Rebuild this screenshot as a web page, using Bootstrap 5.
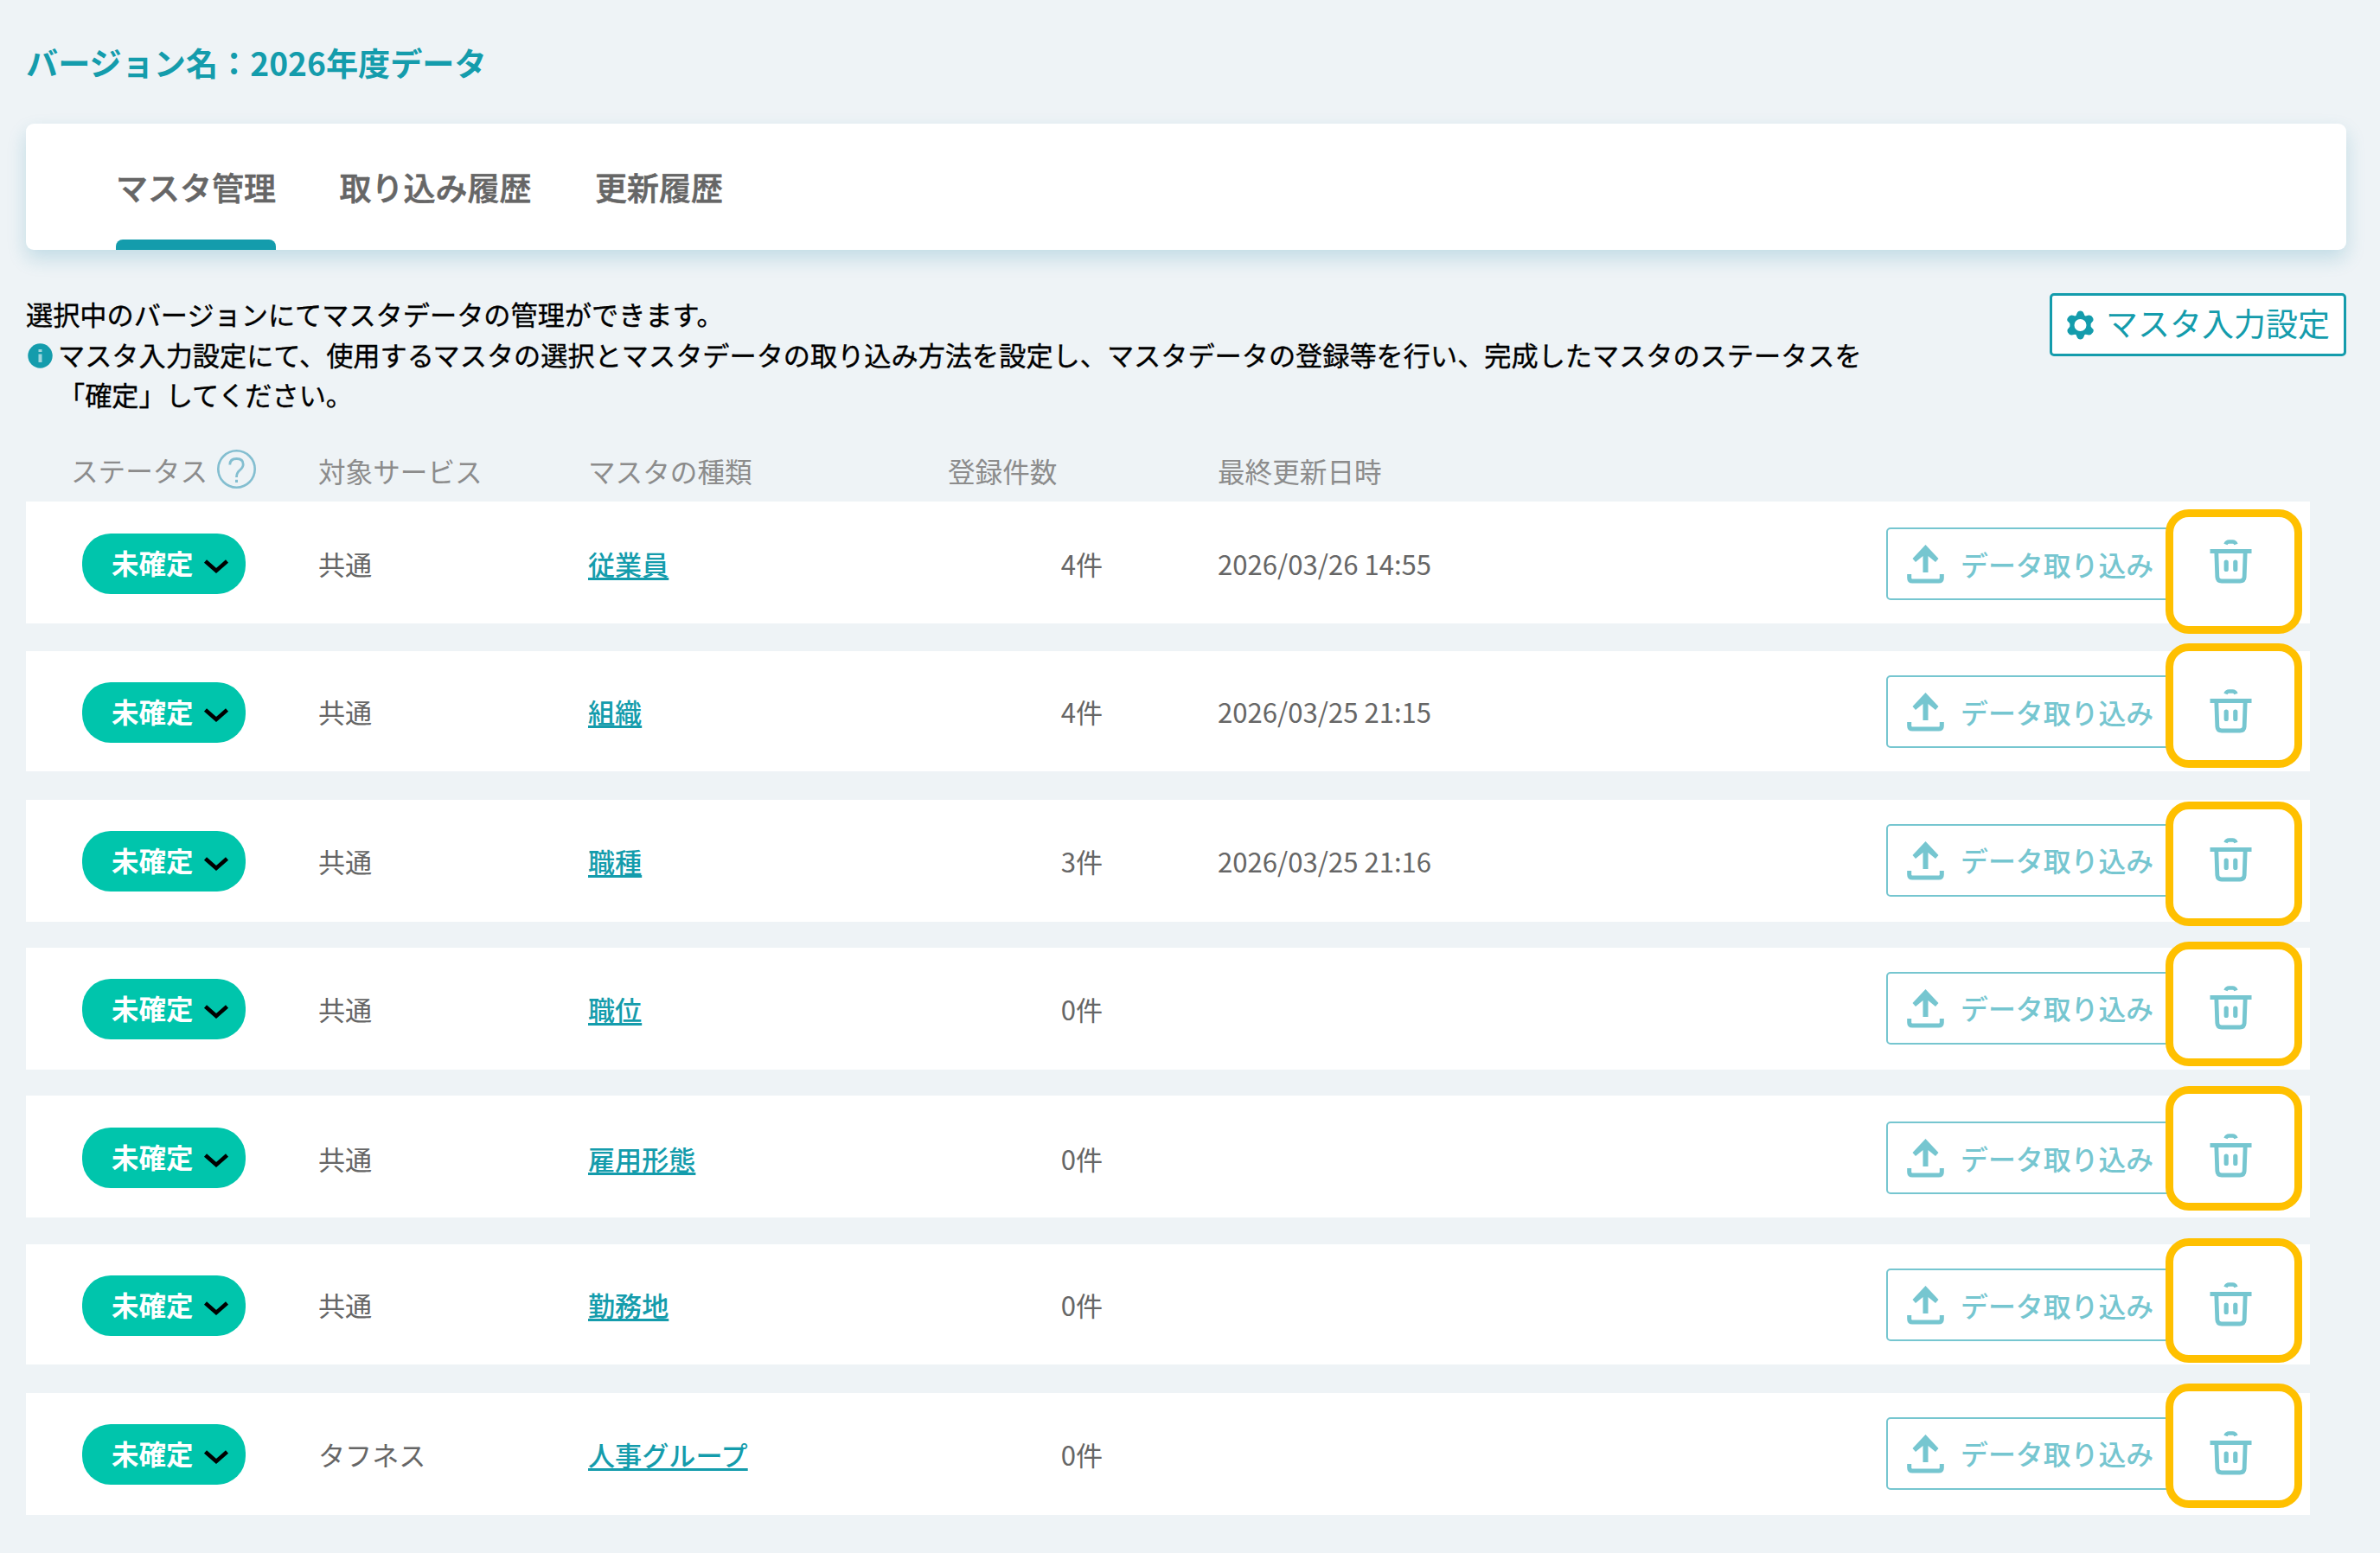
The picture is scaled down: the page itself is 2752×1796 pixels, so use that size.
<!DOCTYPE html>
<html lang="ja">
<head>
<meta charset="utf-8">
<meta name="viewport" content="width=device-width, initial-scale=1">
<title>マスタ管理</title>
<link href="https://cdn.jsdelivr.net/npm/bootstrap@5.3.0/dist/css/bootstrap.min.css" rel="stylesheet">
<style>
  :root { --teal: #149cac; --teal-soft: #76c6d0; --mint: #00c5ac; --amber: #ffc000; }
  body { background: #eef3f6; font-family: "Noto Sans CJK JP", sans-serif; font-size: 31.1px; line-height: 46.5px; color: #000; }
  svg { display: block; flex: none; }
  .page { padding: 0 39px 0 30px; }
  .page-title { height: 143px; padding-top: 49px; font-size: 37.15px; line-height: 46px; font-weight: 700; color: var(--teal); }
  .tab-card { height: 146px; border-radius: 9px; padding-left: 104px; gap: 73.5px; box-shadow: 0 10px 22px rgba(20, 130, 165, .2); }
  .tab-card .nav-link { padding: 50px 0 0; font-size: 37px; line-height: 46px; font-weight: 500; -webkit-text-stroke: .6px #666; color: #666; position: relative; border: 0; }
  .tab-card .nav-link.active::after { content: ""; position: absolute; left: 0; right: 0; bottom: 0; height: 12px; background: var(--teal); border-radius: 8px 8px 0 0; }
  .intro { margin-top: 50px; height: 141px; font-size: 31.18px; }
  .intro-text { padding-top: 1px; -webkit-text-stroke: .35px #000; }
  .note-line svg { margin: 10px 6px 0 2px; }
  .btn-setting { width: 343px; height: 73px; border: 3px solid var(--teal); border-radius: 5px; background: #fff; color: var(--teal); font-size: 37px; line-height: 46px; padding: 0 0 0 16px; gap: 13px; }
  .btn-setting span { margin-top: -5px; }
  .list-head { height: 100px; width: 2641px; padding-bottom: 13px; color: #8c8c8c; font-size: 31.6px; }
  .master-row { width: 2641px; height: 141px; color: #666; margin-bottom: 30.8px; background: #fff; position: relative; }
  .master-row:nth-child(1) { margin-bottom: 32px; }
  .master-row:nth-child(2) { height: 139px; margin-bottom: 32.5px; }
  .master-row:nth-child(3) { margin-bottom: 30px; }
  .master-row:nth-child(6) { height: 139px; margin-bottom: 32.6px; }
  .c-status { width: 338px; flex: none; }
  .c-service { width: 312px; flex: none; }
  .c-type { width: 416px; flex: none; }
  .c-count { width: 179px; flex: none; }
  .c-date { width: 773px; margin-left: 133px; flex: none; }
  .list-head .c-status { padding-left: 52px; }
  .list-head .c-status svg { margin: 0 0 2px 11px; }
  .master-row .c-status { padding-left: 65px; }
  .cell-text { padding-top: var(--drop, 2px); }
  .master-row:nth-child(1), .master-row:nth-child(5) { --drop: 4px; --btn-top: 30px; }
  .pill { width: 189px; height: 70px; margin-top: 2px; border-radius: 33px; background: var(--mint); color: #fff; font-weight: 700; font-size: 31.5px; padding: 0 19px 3px 34px; border: 0; }
  .pill svg { margin-top: 9px; }
  .type-link { color: var(--teal); font-weight: 500; text-decoration: underline; text-decoration-thickness: 3px; text-underline-offset: 2.5px; text-decoration-skip-ink: none; }
  .btn-import { width: 340px; height: 84px; margin-top: var(--btn-top, 28px); border: 2.5px solid var(--teal-soft); border-radius: 5px; color: var(--teal-soft); background: #fff; font-size: 31.9px; font-weight: 500; padding: 0 0 0 22px; gap: 19px; flex: none; }
  .btn-import span { padding-top: 1px; }
  .btn-trash { width: 51px; height: 52px; margin: 43px 0 0 34px; padding: 0; border: 0; color: var(--teal-soft); position: relative; z-index: 2; }
  /* highlight frame lying over the delete button */
  .spot { position: absolute; z-index: 1; left: 2474px; top: var(--spot); width: 158px; height: 144px; border: 9px solid var(--amber); border-radius: 27px; background: #fff; }
  .master-row:nth-child(1) { --spot: 9px; }
  .master-row:nth-child(2) { --spot: -9px; }
  .master-row:nth-child(3) { --spot: 2px; }
  .master-row:nth-child(4) { --spot: -7px; }
  .master-row:nth-child(5) { --spot: -11px; }
  .master-row:nth-child(6) { --spot: -7px; }
  .master-row:nth-child(7) { --spot: -11px; }
</style>
</head>
<body>
<svg class="d-none" xmlns="http://www.w3.org/2000/svg">
  <symbol id="i-down" viewBox="0 0 30 18"><path d="M2.5 3 L15 14 L27.500 3" fill="none" stroke="#000" stroke-width="4.600"/></symbol>
  <symbol id="i-upload" viewBox="0 0 43 46"><path d="M21.500 1 L36.500 17 L33 21 L24.500 14 V33 H18.500 V14 L10 21 L6.500 17 Z" fill="currentColor"/><path d="M2.700 35 V39.500 Q2.700 43 6.200 43 H36.800 Q40.300 43 40.300 39.500 V35" fill="none" stroke="currentColor" stroke-width="5"/></symbol>
  <symbol id="i-trash" viewBox="0 0 49 52"><g fill="none" stroke="currentColor"><path d="M18.500 6.500 Q19.500 3.500 22.500 3.500 H26.500 Q29.500 3.500 30.500 6.500" stroke-width="4.500"/><path d="M0.500 14.500 H48.500" stroke-width="5"/><path d="M7.800 15 L8.800 44 Q9.100 49 14 49 H35 Q39.900 49 40.200 44 L41.200 15" stroke-width="4.800"/><path d="M19.200 27 V35.500 M29.800 27 V35.500" stroke-width="5.200" stroke-linecap="round"/></g></symbol>
</svg>

<div class="page">
  <h1 class="page-title mb-0">バージョン名：2026年度データ</h1>

  <nav class="tab-card nav bg-white d-flex align-items-stretch">
    <a class="nav-link active">マスタ管理</a>
    <a class="nav-link">取り込み履歴</a>
    <a class="nav-link">更新履歴</a>
  </nav>

  <div class="intro d-flex justify-content-between align-items-start">
    <div class="intro-text">
      <div>選択中のバージョンにてマスタデータの管理ができます。</div>
      <div class="note-line d-flex align-items-start">
        <svg width="29" height="29" viewBox="0 0 29 29"><circle cx="14.500" cy="14.500" r="14.200" fill="#149cac"/><path d="M14.500 7 V10 M14.500 12.500 V22" stroke="#9fd6dd" stroke-width="4"/></svg>
        <div>マスタ入力設定にて、使用するマスタの選択とマスタデータの取り込み方法を設定し、マスタデータの登録等を行い、完成したマスタのステータスを<br>「確定」してください。</div>
      </div>
    </div>
    <button class="btn btn-setting d-flex align-items-center">
      <svg width="33" height="34" viewBox="0 0 33 34"><path fill="#149cac" fill-rule="evenodd" d="M12.500 3.500 Q13.500 .5 16.500 .5 T20.500 3.500 L21.500 6 Q23 6.800 24 6 L26.500 5.600 Q29.500 5.500 31 8.500 T30 13.500 L28.600 15.500 V18.500 L30 20.500 Q33 22.500 31 25.500 T26.500 28.400 L24 28 Q23 27.300 21.500 28 L20.500 30.500 Q19.500 33.500 16.500 33.500 T12.500 30.500 L11.500 28 Q10 27.300 9 28 L6.500 28.400 Q3.500 28.500 2 25.500 T3 20.500 L4.400 18.500 V15.500 L3 13.500 Q0 11.500 2 8.500 T6.500 5.600 L9 6 Q10 6.800 11.500 6 Z M16.500 10 A7 7 0 1 0 16.500 24 A7 7 0 1 0 16.500 10 Z"/></svg>
      <span>マスタ入力設定</span>
    </button>
  </div>

  <div class="list-head d-flex align-items-end">
    <div class="c-status d-flex align-items-center"><span>ステータス</span>
      <svg width="45" height="45" viewBox="0 0 45 45" fill="none" stroke="#83bed0"><circle cx="22.500" cy="22.500" r="21.200" stroke-width="2.600"/><path d="M14.800 17.500 Q14.800 10.500 22.500 10.500 Q30.200 10.500 30.200 17 Q30.200 20.500 26 24 Q22.500 27 22.500 32" stroke-width="2.800"/><path d="M22.500 34.800 V38" stroke-width="3"/></svg>
    </div>
    <div class="c-service">対象サービス</div>
    <div class="c-type">マスタの種類</div>
    <div class="c-count">登録件数</div>
    <div class="c-date">最終更新日時</div>
  </div>

  <div class="master-list">
    <div class="master-row d-flex align-items-center">
      <div class="c-status"><button class="pill d-flex align-items-center justify-content-between"><span>未確定</span><svg width="30" height="18"><use href="#i-down"/></svg></button></div>
      <div class="c-service cell-text">共通</div>
      <div class="c-type cell-text"><a class="type-link">従業員</a></div>
      <div class="c-count cell-text text-end">4件</div>
      <div class="c-date cell-text">2026/03/26 14:55</div>
      <button class="btn btn-import d-flex align-items-center align-self-start"><svg width="43" height="46"><use href="#i-upload"/></svg><span>データ取り込み</span></button>
      <div class="spot"></div>
      <button class="btn btn-trash align-self-start"><svg width="49" height="52"><use href="#i-trash"/></svg></button>
    </div>
    <div class="master-row d-flex align-items-center">
      <div class="c-status"><button class="pill d-flex align-items-center justify-content-between"><span>未確定</span><svg width="30" height="18"><use href="#i-down"/></svg></button></div>
      <div class="c-service cell-text">共通</div>
      <div class="c-type cell-text"><a class="type-link">組織</a></div>
      <div class="c-count cell-text text-end">4件</div>
      <div class="c-date cell-text">2026/03/25 21:15</div>
      <button class="btn btn-import d-flex align-items-center align-self-start"><svg width="43" height="46"><use href="#i-upload"/></svg><span>データ取り込み</span></button>
      <div class="spot"></div>
      <button class="btn btn-trash align-self-start"><svg width="49" height="52"><use href="#i-trash"/></svg></button>
    </div>
    <div class="master-row d-flex align-items-center">
      <div class="c-status"><button class="pill d-flex align-items-center justify-content-between"><span>未確定</span><svg width="30" height="18"><use href="#i-down"/></svg></button></div>
      <div class="c-service cell-text">共通</div>
      <div class="c-type cell-text"><a class="type-link">職種</a></div>
      <div class="c-count cell-text text-end">3件</div>
      <div class="c-date cell-text">2026/03/25 21:16</div>
      <button class="btn btn-import d-flex align-items-center align-self-start"><svg width="43" height="46"><use href="#i-upload"/></svg><span>データ取り込み</span></button>
      <div class="spot"></div>
      <button class="btn btn-trash align-self-start"><svg width="49" height="52"><use href="#i-trash"/></svg></button>
    </div>
    <div class="master-row d-flex align-items-center">
      <div class="c-status"><button class="pill d-flex align-items-center justify-content-between"><span>未確定</span><svg width="30" height="18"><use href="#i-down"/></svg></button></div>
      <div class="c-service cell-text">共通</div>
      <div class="c-type cell-text"><a class="type-link">職位</a></div>
      <div class="c-count cell-text text-end">0件</div>
      <div class="c-date cell-text"></div>
      <button class="btn btn-import d-flex align-items-center align-self-start"><svg width="43" height="46"><use href="#i-upload"/></svg><span>データ取り込み</span></button>
      <div class="spot"></div>
      <button class="btn btn-trash align-self-start"><svg width="49" height="52"><use href="#i-trash"/></svg></button>
    </div>
    <div class="master-row d-flex align-items-center">
      <div class="c-status"><button class="pill d-flex align-items-center justify-content-between"><span>未確定</span><svg width="30" height="18"><use href="#i-down"/></svg></button></div>
      <div class="c-service cell-text">共通</div>
      <div class="c-type cell-text"><a class="type-link">雇用形態</a></div>
      <div class="c-count cell-text text-end">0件</div>
      <div class="c-date cell-text"></div>
      <button class="btn btn-import d-flex align-items-center align-self-start"><svg width="43" height="46"><use href="#i-upload"/></svg><span>データ取り込み</span></button>
      <div class="spot"></div>
      <button class="btn btn-trash align-self-start"><svg width="49" height="52"><use href="#i-trash"/></svg></button>
    </div>
    <div class="master-row d-flex align-items-center">
      <div class="c-status"><button class="pill d-flex align-items-center justify-content-between"><span>未確定</span><svg width="30" height="18"><use href="#i-down"/></svg></button></div>
      <div class="c-service cell-text">共通</div>
      <div class="c-type cell-text"><a class="type-link">勤務地</a></div>
      <div class="c-count cell-text text-end">0件</div>
      <div class="c-date cell-text"></div>
      <button class="btn btn-import d-flex align-items-center align-self-start"><svg width="43" height="46"><use href="#i-upload"/></svg><span>データ取り込み</span></button>
      <div class="spot"></div>
      <button class="btn btn-trash align-self-start"><svg width="49" height="52"><use href="#i-trash"/></svg></button>
    </div>
    <div class="master-row d-flex align-items-center">
      <div class="c-status"><button class="pill d-flex align-items-center justify-content-between"><span>未確定</span><svg width="30" height="18"><use href="#i-down"/></svg></button></div>
      <div class="c-service cell-text">タフネス</div>
      <div class="c-type cell-text"><a class="type-link">人事グループ</a></div>
      <div class="c-count cell-text text-end">0件</div>
      <div class="c-date cell-text"></div>
      <button class="btn btn-import d-flex align-items-center align-self-start"><svg width="43" height="46"><use href="#i-upload"/></svg><span>データ取り込み</span></button>
      <div class="spot"></div>
      <button class="btn btn-trash align-self-start"><svg width="49" height="52"><use href="#i-trash"/></svg></button>
    </div>
  </div>
</div>
<script src="https://cdn.jsdelivr.net/npm/bootstrap@5.3.0/dist/js/bootstrap.bundle.min.js"></script>
</body>
</html>
